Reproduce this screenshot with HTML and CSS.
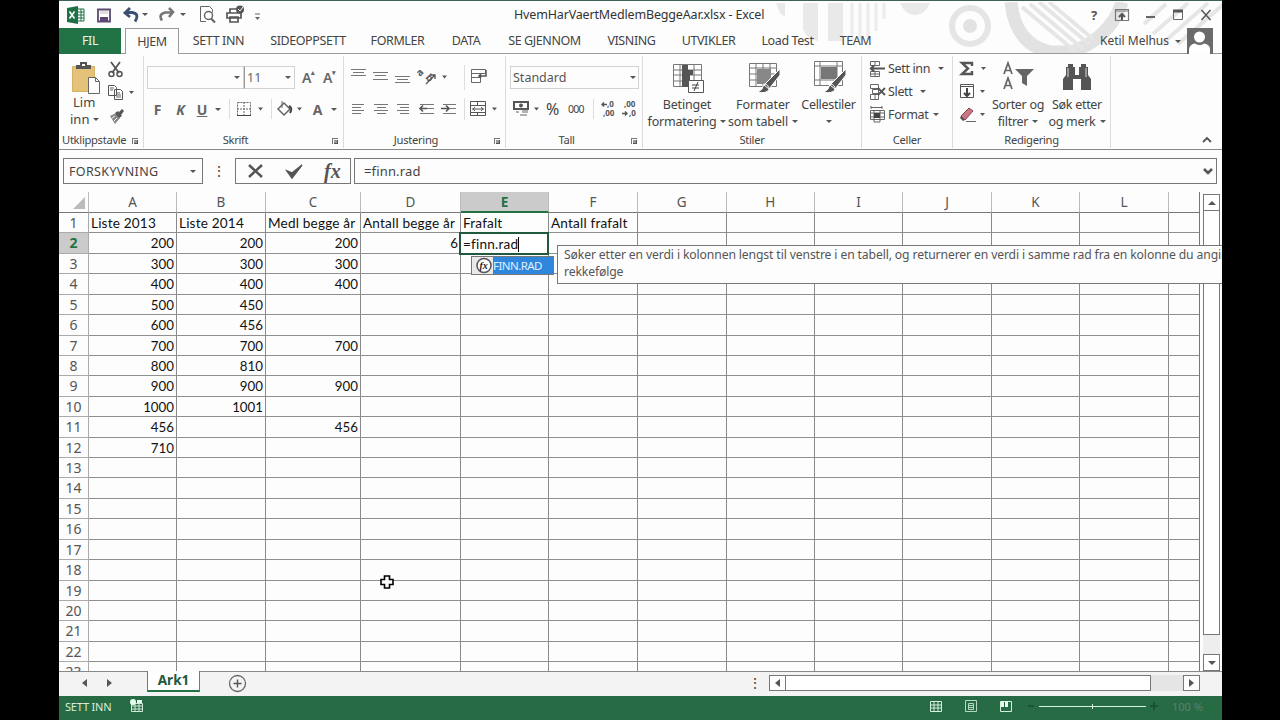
FILE: index.html
```html
<!DOCTYPE html>
<html lang="no">
<head>
<meta charset="utf-8">
<title>HvemHarVaertMedlemBeggeAar.xlsx - Excel</title>
<link rel="stylesheet" href="styles.css">
</head>
<body>
<div class="window">
  <header class="top">
    <svg class="decor" width="520" height="52" viewBox="0 0 520 52" fill="none">
      <g fill="#e9e9e9"><path d="M16 1h9v14l-5-4zM43 1h15v38q-12-2-15-12zM68 1h15v38H68z"/><path d="M140 1h30q-5 12-15 12t-15-12"/></g>
      <g stroke="#ececec" stroke-width="3"><path d="M92 1v38M100 1v38M108 1v36M116 1v28M124 1v16"/></g>
      <circle cx="210" cy="24" r="18" stroke="#e5e5e5" stroke-width="6"/><circle cx="210" cy="24" r="7" fill="#e2e2e2"/>
      <path d="M251 0Q255 42 290 50h22q39-15 50-50" stroke="#e2e2e2" stroke-width="13"/>
      <g stroke="#e6e6e6" stroke-width="4"><path d="M262 5l54 45M270 2l53 45M279 0l50 42M289 0l44 37M384 22l22-20M393 32l35-31M403 41l45-40M418 42l47-41"/></g>
    </svg>
    <div class="title">
      <div class="quick">
        <svg width="22" height="20"><path d="M1 3l11-2v18L1 17z" fill="#1e7145"/><path d="M3.500 6.500l5 7m0-7l-5 7" stroke="#fff" stroke-width="1.600"/><path d="M12 4h6v12h-6M12 7h6m-6 3h6m-6 3h6M15 4v12" fill="none" stroke="#1e7145"/></svg>
        <svg width="28" height="20"><path d="M10 4.500h12v12H10z" fill="#fff" stroke="#5c4772" stroke-width="1.800"/><path d="M12 12h8v4h-8z" fill="#5c4772"/><path d="M12 6h8v3h-8z" fill="#ddd"/></svg>
        <svg width="37" height="20"><path d="M14 3L9 8l5 4M10 7.500h6q8 1 3 9" fill="none" stroke="#3b4f70" stroke-width="2.800"/><path d="M26 8h6l-3 3z" fill="#555"/></svg>
        <svg width="38" height="20"><path d="M16 3l4 4-4 5M19 7.500h-7q-7 2-3 8" fill="none" stroke="#777" stroke-width="2.600"/><path d="M27 8h6l-3 3z" fill="#555"/></svg>
        <svg width="28" height="20"><path d="M15 16.500H9.500v-15h9l3 3v3" fill="#fff" stroke="#666"/><circle cx="17.500" cy="10.500" r="4" fill="#fff" stroke="#666" stroke-width="1.500"/><path d="M20 13.500l4 4" stroke="#666" stroke-width="2.200"/></svg>
        <svg width="30" height="20"><path d="M11 8V4h9v4M8 8h14v5H8zM11 12h8v5h-8z" fill="#fff" stroke="#555" stroke-width="1.700"/><circle cx="21" cy="4.500" r="4" fill="#555"/><path d="M19 4l2 2 3-4" fill="none" stroke="#fff"/></svg>
        <svg class="more" width="12" height="20"><path d="M6 9h5" stroke="#666"/><path d="M6 12h5l-2.500 3z" fill="#666"/></svg>
      </div>
      <div class="filename">HvemHarVaertMedlemBeggeAar.xlsx - Excel</div>
      <div class="winbtns">
        <b>?</b>
        <svg width="28" height="16"><path d="M7.500 2.500h13v11h-13zM7 4h14" fill="none" stroke="#777" stroke-width="1.200"/><path d="M14 13V7m-3 3l3-3 3 3" stroke="#555" stroke-width="2" fill="none"/></svg>
        <svg width="28" height="16"><path d="M10 10h9" stroke="#666" stroke-width="2"/></svg>
        <svg width="28" height="16"><path d="M9.500 3.500h9v9h-9z" fill="none" stroke="#666"/><path d="M9 4h10" stroke="#555" stroke-width="3"/></svg>
        <svg width="28" height="16"><path d="M9.500 3l9 10m0-10l-9 10" stroke="#555" stroke-width="1.500"/></svg>
      </div>
    </div>
    <nav class="tabs">
      <span class="file">FIL</span><i></i><span class="active">HJEM</span><span>SETT INN</span><span>SIDEOPPSETT</span><span>FORMLER</span><span>DATA</span><span>SE GJENNOM</span><span>VISNING</span><span>UTVIKLER</span><span>Load Test</span><span>TEAM</span>
      <div class="user"><span>Ketil Melhus</span><em class="dd"></em><svg width="26" height="26"><path d="M0 0h26v26H0z" fill="#6b6b6b"/><circle cx="12.500" cy="9" r="5.500" fill="#fff"/><path d="M2 26v-5q1-5 6-5.500 5 3 9 0 6 1 6 5.500v5z" fill="#fff"/></svg></div>
    </nav>
  </header>

  <section class="ribbon">
    <div class="group clip">
      <div class="body">
        <div class="paste">
          <svg width="32" height="34"><path d="M2.500 6.500h22v25h-22z" fill="#e5c27a" stroke="#d7b062"/><path d="M6 5h4V2h7v3h4v4H6z" fill="#555"/><path d="M12 4h3v2h-3z" fill="#fff"/><path d="M18.500 17.500h7l4 4v12h-11z" fill="#fff" stroke="#666"/><path d="M25.500 17.500v4h4" fill="none" stroke="#666"/></svg>
          <span>Lim</span><span>inn<em class="dd"></em></span>
        </div>
        <div class="stack">
          <svg width="32" height="23"><path d="M4 1l8 11M13 1L5 12" stroke="#555" stroke-width="1.800"/><circle cx="4.500" cy="13" r="2.500" fill="none" stroke="#555" stroke-width="1.500"/><circle cx="12.500" cy="13" r="2.500" fill="none" stroke="#555" stroke-width="1.500"/></svg>
          <svg width="32" height="23"><path d="M1.500 1.500h6l2 2v8h-8zM7.500 5.500h6l2 2v8h-8z" fill="#fff" stroke="#555"/><path d="M3 4h4M3 6h3M9 9h4m-4 2h5m-5 2h5" stroke="#666"/><path d="M22 7h5l-2.500 3z" fill="#555"/></svg>
          <svg width="32" height="23"><path d="M3 9l6-3 4 5-5 6z" fill="#888"/><path d="M5 11l3-2m-1 5l3-3" stroke="#eee"/><path d="M8 6l3-2 4 5-3 2zM12 5l3-3 2 2-3 4" fill="#555"/></svg>
        </div>
      </div>
      <footer>Utklippstavle<s></s></footer>
    </div>
    <div class="group font">
      <div class="body col">
        <div class="row">
          <div class="combo c1"><em class="dd"></em></div><div class="combo c2">11<em class="dd"></em></div>
          <span class="grow">A<sup>▴</sup></span><span class="grow g2">A<sup>▾</sup></span>
        </div>
        <div class="row r2">
          <b class="fmt">F</b><b class="fmt it">K</b><b class="fmt un">U</b><em class="dd"></em><i class="sep"></i>
          <svg width="34" height="22"><path d="M7.500 4.500h13v13h-13zM14 4v14M7 11h14" fill="none" stroke="#666" stroke-dasharray="2 1"/><path d="M7 17.500h14" stroke="#444"/><path d="M28 9.500h5l-2.500 3z" fill="#555"/></svg>
          <i class="sep s2"></i>
          <svg width="31" height="22"><path d="M6 11l6-6 6 6-6 6z" fill="#fff" stroke="#666" stroke-width="1.500"/><path d="M10 3v7" stroke="#666"/><path d="M17 8q4 2 1 7" fill="none" stroke="#444" stroke-width="2"/><path d="M25 9.500h5l-2.500 3z" fill="#555"/></svg>
          <b class="fmt color">A</b><em class="dd"></em>
        </div>
      </div>
      <footer>Skrift<s></s></footer>
    </div>
    <div class="group align">
      <div class="body col">
        <div class="row">
          <svg width="22" height="26"><path d="M4 5.500h15M6 8.500h11M4 11.500h15" stroke="#777"/></svg>
          <svg width="22" height="26"><path d="M4 8.500h15M6 11.500h11M4 15.500h15" stroke="#777"/></svg>
          <svg width="22" height="26"><path d="M4 12.500h15M6 15.500h11M4 18.500h15" stroke="#777"/></svg>
          <svg width="44" height="26"><text x="0" y="0" transform="translate(7 13) rotate(-45)" class="ab">a</text><text x="0" y="0" transform="translate(12 14) rotate(45)" class="ab">b</text><path d="M13 20l9-9m-4 0h4v4" fill="none" stroke="#555" stroke-width="1.300"/><path d="M29 11.500h5l-2.500 3z" fill="#555"/></svg>
          <svg width="40" height="26"><path d="M7.500 1v25" stroke="#ddd"/><path d="M14.500 5.500h14v4h-14zM14.500 9.500h9v4h-9zM14.500 13.500h9v5h-9z" fill="#fff" stroke="#666"/><path d="M29 6v6h-7m2-2l-2 2 2 2" fill="none" stroke="#555" stroke-width="1.500"/></svg>
        </div>
        <div class="row r2">
          <svg width="22" height="22"><path d="M5 6.500h12M5 9.500h9M5 12.500h12M5 15.500h9" stroke="#777"/></svg>
          <svg width="22" height="22"><path d="M5 6.500h14M8 9.500h9M5 12.500h14M8 15.500h9" stroke="#777"/></svg>
          <svg width="22" height="22"><path d="M6 6.500h12M9 9.500h9M6 12.500h12M9 15.500h9" stroke="#777"/></svg>
          <svg width="22" height="22"><path d="M7 6.500h14m-7 4h7m-14 5h14" stroke="#777"/><path d="M14 10.500H7m3-3l-3 3 3 3" fill="none" stroke="#555" stroke-width="1.600"/></svg>
          <svg width="22" height="22"><path d="M8 6.500h13m-6 4h6m-13 5h13" stroke="#777"/><path d="M6 10.500h8m-3-3l3 3-3 3" fill="none" stroke="#555" stroke-width="1.600"/></svg>
          <svg width="40" height="22"><path d="M7.500 0v22" stroke="#ddd"/><path d="M13.500 3.500h15v14h-15zM13 7.500h16m-16 7h16M20.500 3v4m0 7v4" fill="none" stroke="#555"/><path d="M15 11h12m-9-2l-2 2 2 2m6-4l2 2-2 2" fill="none" stroke="#555"/><path d="M35 9.500h5l-2.500 3z" fill="#555"/></svg>
        </div>
      </div>
      <footer>Justering<s></s></footer>
    </div>
    <div class="group num">
      <div class="body col">
        <div class="row"><div class="combo c3">Standard<em class="dd"></em></div></div>
        <div class="row r2">
          <svg width="37" height="22"><path d="M5 4h14v7H5z" fill="#fff" stroke="#555" stroke-width="2"/><circle cx="12" cy="7.500" r="2" fill="#555"/><path d="M13 12h6m-6 2h6m-8 3h7M7 14h3" stroke="#666"/><path d="M25 9.500h5l-2.500 3z" fill="#555"/></svg>
          <span class="pct">%</span><span class="zeros">000</span>
          <svg width="22" height="22"><path d="M0.500 1v20" stroke="#ddd"/><text x="14" y="9" class="tiny">,0</text><text x="10" y="18" class="tiny">,00</text><path d="M14 6.500H9m2-2l-2 2 2 2" fill="none" stroke="#555" stroke-width="1.400"/></svg>
          <svg width="22" height="22"><text x="9" y="9" class="tiny">,00</text><text x="14" y="18" class="tiny">,0</text><path d="M7 15.500h5m-2-2l2 2-2 2" fill="none" stroke="#555" stroke-width="1.400"/></svg>
        </div>
      </div>
      <footer>Tall<s></s></footer>
    </div>
    <div class="group styles">
      <div class="body">
        <div class="big b1"><svg width="34" height="34"><path d="M3.500 3.500h28v22h-28zM3 9h29M3 14h29M3 20h29M10 3v23M24 3v23" fill="#fff" stroke="#777"/><path d="M12 4h6v5h5v5h-3v6h-2v6h-6z" fill="#555"/><path d="M18.500 19.500h15v12h-15z" fill="#fff" stroke="#555"/><path d="M22 24h7m-7 3h7m-5 3l4-9" stroke="#444"/></svg><span>Betinget</span><span>formatering<em class="dd"></em></span></div>
        <div class="big b2"><svg width="34" height="34"><path d="M3.500 2.500h27v23h-27zM3 7h28M3 13h28M3 19h28M10 2v24M17 2v24M24 2v24" fill="#fff" stroke="#777"/><path d="M11 8h14v15H11z" fill="#888"/><path d="M34 8v6l-11 14-5-4zM18 23q5 0 5 6-4 4-11 2 5-2 6-8" fill="#555" stroke="#fff"/></svg><span>Formater</span><span>som tabell<em class="dd"></em></span></div>
        <div class="big b3"><svg width="34" height="34"><path d="M2.500 .5h28v24h-28zM2 5h29M2 19h29M8 1v24M25 1v24" fill="#fff" stroke="#777"/><path d="M9 6h16v12H9z" fill="#777"/><path d="M34 8v6l-11 14-5-4zM18 23q5 0 5 6-4 4-11 2 5-2 6-8" fill="#555" stroke="#fff"/></svg><span>Cellestiler</span><span><em class="dd"></em></span></div>
      </div>
      <footer>Stiler</footer>
    </div>
    <div class="group cells">
      <div class="body col">
        <div class="row"><svg width="22" height="18"><path d="M4.500 1.500h9v4h-9zM4.500 11.500h9v5h-9zM9 1v4m0 6v5M4 14h10" fill="#fff" stroke="#666"/><path d="M19 8.500H5m3-3l-3 3 3 3" stroke="#555" stroke-width="2.200" fill="none"/></svg><span class="l1">Sett inn</span><em class="dd"></em></div>
        <div class="row"><svg width="22" height="18"><path d="M4.500 1.500h8v4h-8zM6.500 6.500h6v4h-6zM4.500 11.500h8v5h-8zM9 11v5" fill="#fff" stroke="#666"/><path d="M12 5l7 7m0-7l-7 7" stroke="#555" stroke-width="1.800"/></svg><span class="l2">Slett</span><em class="dd"></em></div>
        <div class="row"><svg width="22" height="18"><path d="M5 0v3m11-3v3M5 1.500h11M4.500 4.500h14v9h-14zM4 7h15M4 11h15M8 4v12h6V4" fill="none" stroke="#666"/><path d="M8 7h6v5H8z" fill="#444"/></svg><span class="l3">Format</span><em class="dd"></em></div>
      </div>
      <footer>Celler</footer>
    </div>
    <div class="group edit">
      <div class="body">
        <div class="stack">
          <svg width="32" height="23"><path d="M19 5V2H9l6 5.500L9 13h10v-3" fill="none" stroke="#555" stroke-width="2.400"/><path d="M28 6h5l-2.500 3z" fill="#555"/></svg>
          <svg width="32" height="23"><path d="M7.500 .5h13v13h-13zM7 2.500h14" fill="#fff" stroke="#555"/><path d="M14 4v8m-3-3l3 3 3-3" fill="none" stroke="#444" stroke-width="2"/><path d="M27 6h5l-2.500 3z" fill="#555"/></svg>
          <svg width="32" height="23"><path d="M8 9l8-8 4 3-8 9z" fill="#c97683" stroke="#8b4450"/><path d="M8 9l4 4-2 1-3-3z" fill="#555"/><path d="M13 14.500h10" stroke="#666"/><path d="M27 6h5l-2.500 3z" fill="#555"/></svg>
        </div>
        <div class="big b4"><svg width="34" height="34"><path d="M4 13L8 2l4 11M5.500 9.500h5M4 28L8 17l4 11M5.500 24.500h5" fill="none" stroke="#666" stroke-width="1.700"/><path d="M15 8h19l-7 7v10l-5-3v-7z" fill="#666"/></svg><span>Sorter og</span><span>filtrer<em class="dd"></em></span></div>
        <div class="big b5"><svg width="34" height="34"><path d="M8 3h5v3h2v9h-2v14H3V18l3-4V6h2zM21 3h5v3h2v8l3 4v11H21V15h-2V6h2zM13 14h8v4h-8z" fill="#555"/><path d="M8 7v9m18-9v9" stroke="#ddd"/></svg><span>Søk etter</span><span>og merk<em class="dd"></em></span></div>
      </div>
      <footer>Redigering</footer>
    </div>
    <svg class="collapse" width="12" height="10"><path d="M2 7l4-4 4 4" fill="none" stroke="#555" stroke-width="1.800"/></svg>
  </section>

  <section class="formulabar">
    <div class="namebox"><span>FORSKYVNING</span><em class="dd"></em></div>
    <div class="dots">⋮</div>
    <div class="fx">
      <svg width="40" height="24"><path d="M13 6l13 12M26 6L13 18" stroke="#555" stroke-width="2.500"/></svg>
      <svg width="38" height="24"><path d="M11 12l5 7L26 6l-10 8z" fill="#555" stroke="#555" stroke-width="1.500"/></svg>
      <span>fx</span>
    </div>
    <div class="formula"><span>=finn.rad</span><svg width="12" height="10"><path d="M2 3l4 4 4-4" fill="none" stroke="#555" stroke-width="2.600"/></svg></div>
  </section>

  <section class="sheet">
    <div class="grid" id="grid"></div>
    <div class="vscroll"><div class="sbtn"><i class="up"></i></div><div class="vthumb"></div><div class="vtrack"></div><div class="sbtn"><i class="down"></i></div></div>
    <div class="editcell">=finn.rad<u></u></div>
    <div class="suggest"><svg width="23" height="18"><circle cx="12" cy="8.500" r="7" fill="#fff" stroke="#555" stroke-width="1.500"/><text x="7.500" y="12" class="fxs">fx</text></svg><span>FINN.RAD</span></div>
    <div class="hint"><p>Søker etter en verdi i kolonnen lengst til venstre i en tabell, og returnerer en verdi i samme rad fra en kolonne du angir.</p><p>rekkefølge</p></div>
    <svg class="cursor" width="14" height="14"><path d="M4.500 1h5v3.500H13v5H9.500V13h-5V9.500H1v-5h3.500z" fill="#fff" stroke="#000" stroke-width="1.600"/></svg>
  </section>

  <section class="sheettabs">
    <div class="arrows"><i class="left"></i><i class="right"></i></div>
    <div class="tab">Ark1</div>
    <svg class="plus" width="19" height="19"><circle cx="9.500" cy="9.500" r="8" fill="none" stroke="#666" stroke-width="1.300"/><path d="M9.500 5.500v8m-4-4h8" stroke="#555" stroke-width="1.400"/></svg>
    <div class="dots2">⋮</div>
    <div class="hscroll"><div class="sbtn"><i class="left"></i></div><div class="hthumb"></div><div class="htrack"></div><div class="sbtn"><i class="right"></i></div></div>
  </section>

  <footer class="status">
    <span class="mode">SETT INN</span>
    <svg width="16" height="16"><path d="M2.500 5.500h11v8h-11zM2 8h12M2 11h12M6 5v9m4-9v9" fill="none" stroke="#cfe8d8"/><circle cx="4" cy="4" r="3" fill="#e8fff0"/><path d="M8 2h5v3H8z" fill="#e8fff0"/></svg>
    <div class="views">
      <svg width="14" height="14"><path d="M1.500 2.500h11v10h-11zM1 6h12M1 9h12M5 2v11m4-11v11" fill="none" stroke="#d5f0dd"/></svg>
      <svg width="14" height="14"><path d="M1.500 1.500h11v11h-11zM4.500 4.500h5v6h-5zM4 6.500h6m-6 2h6" fill="none" stroke="#b5d9c1"/></svg>
      <svg width="14" height="14"><path d="M1.500 2.500h11v10h-11z" fill="none" stroke="#d5f0dd"/><path d="M2 2h3v6H2zM6 2h3v6H6z" fill="#e8fff0"/></svg>
    </div>
    <svg class="zoom" width="132" height="14"><path d="M1 7h6m116 0h8m-4-4v8" stroke="#174d30" stroke-width="1.500"/><path d="M12 7.500h107M65.500 5v5" stroke="#d5f0dd"/></svg>
    <span class="percent">100 %</span>
  </footer>
</div>
<script src="app.js"></script>
</body>
</html>
```
FILE: styles.css
```css
* { box-sizing: border-box; }
body { margin: 0; background: #000; width: 1280px; height: 720px; overflow: hidden; font: 12.5px "Noto Sans", "Open Sans", sans-serif; color: #444; }
svg { display: block; flex: none; }
p { margin: 0; }
.window { width: 1163px; height: 720px; margin-left: 59px; background: #fdfdfd; display: flex; flex-direction: column; overflow: hidden; }
.window > * { flex: none; }
.dd { display: inline-block; width: 0; height: 0; flex: none; border: 3px solid transparent; border-top: 3px solid #555; border-bottom: 0; }

.top { height: 54px; position: relative; border-top: 1px solid #40605a; }
.decor { position: absolute; left: 701px; top: 1px; }
.title { height: 27px; display: flex; align-items: center; position: relative; }
.quick { width: 455px; padding-left: 7px; display: flex; align-items: center; }
.filename { width: 577px; letter-spacing: -0.16px; color: #333; }
.winbtns { display: flex; align-items: center; }
.winbtns b { font-size: 13px; width: 7px; color: #555; }
.winbtns svg:nth-child(2) { margin-left: 10px; }

.tabs { height: 26px; position: relative; display: grid; grid-template-columns: 62px 4px 54px 79px 100px 79px 58px 99px 75px 79px 79px 57px 1fr; border-bottom: 1px solid #999; line-height: 26px; }
.tabs > span { text-align: center; letter-spacing: -0.4px; white-space: nowrap; }
.tabs .file { background: #217346; color: #e7f5ec; height: 26px; }
.tabs .active { background: #fdfdfd; border: 1px solid #999; border-bottom: 0; height: 26px; line-height: 25px; }
.user { display: flex; align-items: center; justify-content: flex-end; padding-right: 9px; letter-spacing: -0.02px; height: 26px; font-size: 12px; white-space: nowrap; }
.user .dd { margin: 0 6px; }

.ribbon { height: 96px; display: flex; border-bottom: 1px solid #8a8a8a; position: relative; }
.group { height: 92px; margin-top: 2px; border-right: 1px solid #dcdcdc; display: flex; flex-direction: column; }
.group .body { height: 77px; display: flex; }
.group .col { flex-direction: column; }
.group footer { font-size: 11.2px; height: 16px; line-height: 16px; text-align: center; letter-spacing: -0.3px; position: relative; }
.group s { position: absolute; right: 5px; top: 6px; width: 6px; height: 6px; border-left: 1px solid #777; border-top: 1px solid #777; }
.group s::after { content: ""; position: absolute; right: 0; bottom: 0; width: 3px; height: 3px; border-right: 1px solid #555; border-bottom: 1px solid #555; background: #999; }
.row { display: flex; align-items: center; }
.clip { width: 85px; } .clip footer { text-align: left; padding-left: 3px; }
.font { width: 200px; } .font footer { padding-right: 16px; }
.align { width: 162px; } .align footer { padding-right: 17px; }
.num { width: 137px; } .num footer { padding-right: 15px; }
.styles { width: 219px; } .cells { width: 91px; } .edit { width: 158px; }
.paste { width: 48px; padding: 4px 0 0 11px; line-height: 17px; font-size: 13px; }
.paste span { display: block; white-space: nowrap; margin-left: 3px; }
.paste span + span { margin-left: 0; }
.paste .dd { margin: 0 0 3px 4px; }
.stack { padding-top: 5px; }
.font .row:first-child { margin: 9px 0 0 3px; height: 25px; }
.combo { height: 23px; border: 1px solid #d2d2d2; display: flex; align-items: center; justify-content: flex-end; padding: 0 4px; color: #666; }
.c1 { width: 97px; padding-right: 3px; } .c2 { width: 51px; justify-content: space-between; padding: 0 3px 0 2px; border-left: 1px solid #999; }
.c3 { width: 129px; margin-left: 1px; justify-content: space-between; padding: 0 2px; color: #555; }
.grow { width: 21px; padding-left: 7px; font-size: 14px; font-weight: 600; color: #666; white-space: nowrap; line-height: 20px; }
.grow sup { font-size: 7px; line-height: 0; vertical-align: 8px; }
.row.r2 { height: 22px; margin-top: 8px; }
.fmt { width: 23px; text-align: center; color: #666; font-size: 14px; }
.font .r2 { padding-left: 2px; }
.it { font-style: italic; } .un { text-decoration: underline; width: 20px; }
.font .un + .dd { margin-left: 3px; }
.sep { width: 1px; height: 20px; background: #ddd; margin-left: 8px; }
.s2 { margin-left: 7px; }
.color { margin-left: 3px; font-size: 14px; }
.color + .dd { margin-left: 2px; }
.align .body, .num .body { padding-left: 3px; }
.align .row:first-child, .num .row:first-child { height: 26px; margin-top: 8px; }
.align .row.r2, .num .row.r2 { margin-top: 8px; }
.ab { font: bold 10px "Noto Sans", sans-serif; fill: #555; }
.pct { font-size: 16px; width: 22px; letter-spacing: 0; }
.zeros { font-size: 10.5px; width: 25px; letter-spacing: -0.7px; }
.tiny { font: bold 8px "Noto Sans", sans-serif; fill: #555; }
.big { display: flex; flex-direction: column; align-items: center; line-height: 17px; padding-top: 5px; white-space: nowrap; letter-spacing: -0.1px; }
.big span { min-height: 17px; }
.big svg { margin-bottom: 1px; }
.big .dd { margin: 0 0 3px 4px; }
.b1 { width: 86px; margin-left: 1px; letter-spacing: -0.2px; } .b2 { width: 66px; } .b3 { width: 65px; letter-spacing: -0.3px; }
.b3 .dd { margin-left: 0; }
.cells .body { padding: 1px 0 0 4px; }
.cells .row { height: 23px; letter-spacing: -0.35px; }
.cells .dd { margin-left: 8px; }
.cells .l3 + .dd { margin-left: 5px; }
.edit .stack svg { overflow: visible; }
.b4 { width: 66px; letter-spacing: -0.3px; } .b5 { width: 52px; letter-spacing: -0.3px; }
.b4 svg { margin-right: 2px; }
.collapse { position: absolute; right: 9px; bottom: 4px; }

.formulabar { height: 42px; padding: 8px 5px 0 4px; display: flex; align-items: flex-start; background: #fdfdfd; }
.formulabar > div { height: 26px; }
.namebox, .fx, .formula { border: 1px solid #777; display: flex; align-items: center; }
.namebox { width: 140px; justify-content: space-between; padding: 0 6px 0 5px; letter-spacing: 0.36px; }
.dots { width: 32px; text-align: center; line-height: 26px; font-size: 14px; }
.fx { width: 116px; }
.fx span { font: italic bold 20px "Liberation Serif", serif; margin-left: 10px; color: #555; }
.formula { margin-left: 3px; flex: 1; justify-content: space-between; padding: 0 2px 0 9px; font-size: 13px; letter-spacing: 0.15px; }

.sheet { height: 479px; display: flex; position: relative; overflow: hidden; }
.grid { width: 1141px; height: 479px; overflow: hidden; border-right: 1px solid #777; }
.line { display: grid; grid-template-columns: 30px 88px 89px 95px 100px 88px 89px 88.5px 88.5px 88px 89px 88px 89px 40px; height: 20.43px; }
.line.head { height: 21px; }
.line div { border-right: 1px solid #8a8a8a; border-bottom: 1px solid #909090; font: 13.6px Lato, "Open Sans", sans-serif; letter-spacing: 0.18px; color: #111; line-height: 21px; white-space: nowrap; overflow: hidden; padding: 0 2px; }
.line .n { text-align: right; font-size: 13.3px; letter-spacing: 0; }
.line .h { text-align: center; font: 14px "Noto Sans", sans-serif; letter-spacing: 0; line-height: 20px; color: #555; border-color: #aaa; }
.head .h { font-size: 13.5px; border-bottom-color: #777; border-right-color: #bbb; line-height: 21px; }
.line .sel { background: #cbcbcb; color: #217346; font-weight: bold; }
.head .sel { border-bottom: 2px solid #217346; }
.corner { position: relative; }
.head .corner::after { content: ""; position: absolute; right: 3px; bottom: 3px; border: 6px solid transparent; border-right-color: #bbb; border-bottom-color: #bbb; }
.vscroll { width: 17px; margin: 2px 0 0 3px; height: 477px; display: flex; flex-direction: column; background: #eee; }
.sbtn { width: 17px; height: 17px; border: 1px solid #777; background: #fff; display: flex; align-items: center; justify-content: center; flex: none; }
.up, .down, .left, .right { width: 0; height: 0; border: 4px solid transparent; }
.up { border-bottom-color: #555; border-top: 0; }
.down { border-top-color: #555; border-bottom: 0; }
.left { border-right: 5px solid #555; border-left: 0; }
.right { border-left: 5px solid #555; border-right: 0; }
.vthumb { height: 424px; border: 1px solid #777; border-top: 0; background: #fff; }
.vtrack { flex: 1; }
.editcell { position: absolute; left: 400px; top: 40px; width: 90px; height: 23px; border: 2px solid #21593f; background: #fff; font: 13.6px/20px Lato, sans-serif; color: #111; padding-left: 2px; letter-spacing: 0.2px; }
.editcell u { display: inline-block; width: 1px; height: 15px; background: #000; vertical-align: -3px; }
.suggest { position: absolute; left: 412px; top: 64px; width: 83px; height: 19px; border: 1px solid #777; display: flex; background: #e9e9e9; }
.suggest span { flex: 1; background: #2e86dd; color: #e0f0ff; font-size: 11.5px; line-height: 18px; letter-spacing: -0.55px; white-space: nowrap; }
.suggest svg { width: 21px; }
.fxs { font: italic bold 10px "Liberation Serif", serif; fill: #222; }
.hint { position: absolute; left: 498px; top: 53px; width: 800px; height: 39px; border: 1px solid #777; background: #fdfdfd; padding: 0 6px; line-height: 17px; white-space: nowrap; font-size: 12.2px; letter-spacing: -0.13px; color: #555; }
.cursor { position: absolute; left: 321px; top: 383px; }

.sheettabs { height: 25px; background: #f3f3f3; border-top: 1px solid #888; display: flex; }
.arrows { width: 88px; padding: 7px 0 0 23px; display: flex; gap: 20px; }
.tab { width: 53px; height: 21px; margin-top: -1px; background: #fff; border: 1px solid #777; border-top: 0; border-bottom: 2px solid #217346; color: #21593f; font-weight: bold; font-size: 13.5px; line-height: 18px; text-align: center; }
.plus { margin: 2px 0 0 28px; }
.dots2 { margin-left: 499px; width: 18px; text-align: center; line-height: 22px; font-size: 14px; }
.hscroll { display: flex; margin: 3px 0 0 5px; height: 16px; width: 431px; background: #e5e5e5; }
.hscroll .sbtn { height: 16px; }
.hthumb { width: 365px; border: 1px solid #777; border-left: 0; background: #fff; }
.htrack { flex: 1; }

.status { height: 24px; background: #276b45; display: flex; align-items: center; padding-bottom: 4px; color: #d7eddf; }
.mode { font-size: 11px; width: 70px; padding-left: 6px; letter-spacing: -0.2px; }
.views { display: flex; gap: 21px; margin-left: 784px; }
.zoom { margin-left: 14px; }
.percent { font-size: 11px; margin-left: 13px; color: #5c8069; }
```
FILE: app.js
```js
const names = ["A", "B", "C", "D", "E", "F", "G", "H", "I", "J", "K", "L", ""];
const rows = [
  ["Liste 2013", "Liste 2014", "Medl begge år", "Antall begge år", "Frafalt", "Antall frafalt"],
  [200, 200, 200, 6], [300, 300, 300], [400, 400, 400], [500, 450], [600, 456],
  [700, 700, 700], [800, 810], [900, 900, 900], [1000, 1001], [456, "", 456], [710]
];
const grid = document.getElementById("grid");
function addLine(kind, label, values, labelClass) {
  const line = document.createElement("div");
  line.className = "line " + kind;
  const first = document.createElement("div");
  first.className = "h " + labelClass;
  first.textContent = label;
  line.append(first);
  for (let i = 0; i < 13; i++) {
    const cell = document.createElement("div");
    const value = values[i] ?? "";
    cell.textContent = value;
    if (kind === "head") cell.className = i === 4 ? "h sel" : "h";
    else if (typeof value === "number") cell.className = "n";
    line.append(cell);
  }
  grid.append(line);
}
addLine("head", "", names, "corner");
for (let r = 1; r <= 23; r++) addLine("", r, rows[r - 1] || [], r === 2 ? "sel" : "");
```
